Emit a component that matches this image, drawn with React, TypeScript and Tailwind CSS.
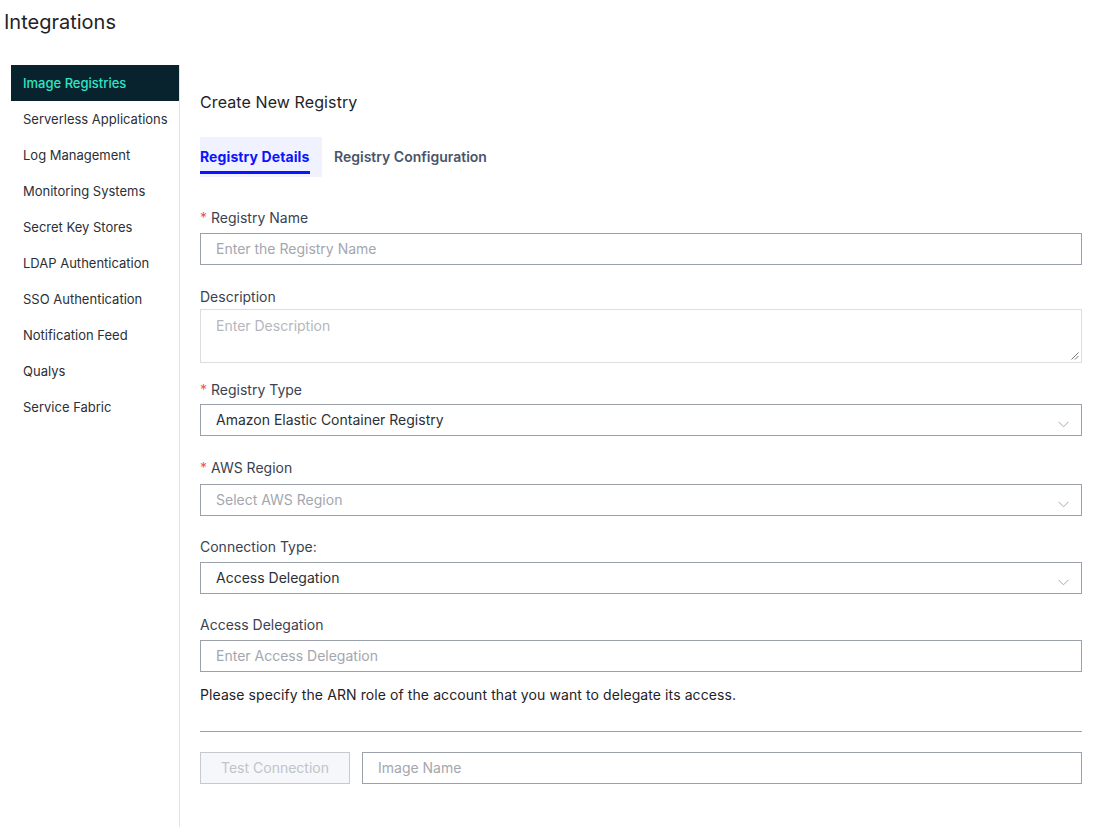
import React from "react";

const navItems = [
  "Image Registries",
  "Serverless Applications",
  "Log Management",
  "Monitoring Systems",
  "Secret Key Stores",
  "LDAP Authentication",
  "SSO Authentication",
  "Notification Feed",
  "Qualys",
  "Service Fabric",
];

function Chevron() {
  return (
    <svg width="11" height="7" viewBox="0 0 11 7" className="absolute right-[12px] top-[16px]">
      <path d="M0.5 0.8 L5.5 5.8 L10.5 0.8" fill="none" stroke="#a3aab8" strokeWidth="1" />
    </svg>
  );
}

function Label({ text, required }: { text: string; required?: boolean }) {
  return (
    <div className="text-[14px] leading-[20px] text-[#3b4252]">
      {required && <span className="text-[#f0555a] mr-[4px]">*</span>}
      {text}
    </div>
  );
}

function Select({ value, placeholder }: { value?: string; placeholder?: string }) {
  return (
    <div className="relative h-[32px] border border-[#9aa1aa] flex items-center pl-[15px] pb-[1px] text-[14px]">
      {value ? (
        <span className="text-[#2b2f36]">{value}</span>
      ) : (
        <span className="text-[#a3a7ae]">{placeholder}</span>
      )}
      <Chevron />
    </div>
  );
}

function Input({ placeholder }: { placeholder: string }) {
  return (
    <div className="h-[32px] border border-[#9aa1aa] flex items-center pl-[15px] pb-[1px] text-[14px] text-[#a3a7ae]">
      {placeholder}
    </div>
  );
}

export default function App() {
  return (
    <div className="w-[1099px] h-[827px] bg-white overflow-hidden" style={{ fontFamily: "Inter, 'Noto Sans', sans-serif" }}>
      <div className="pl-[4px] pt-[9px] text-[20px] leading-[26px] text-[#1f2328]">Integrations</div>
      <div className="flex mt-[30px] pl-[11px]">
        <div className="w-[169px] h-[800px] border-r border-[#e3e4e6] flex flex-col">
          {navItems.map((item, i) => (
            <div
              key={item}
              className={
                i === 0
                  ? "h-[36px] flex items-center pl-[12px] pt-[2px] text-[13px] bg-[#08232d] text-[#2ee6c6] font-medium"
                  : "h-[36px] flex items-center pl-[12px] pt-[2px] text-[13px] text-[#2b2f36]"
              }
            >
              {item}
            </div>
          ))}
        </div>
        <div className="w-[882px] ml-[20px]">
          <div className="mt-[26px] text-[16px] leading-[22px] text-[#1f2328] tracking-[0.1px]">Create New Registry</div>
          <div className="flex mt-[24px] h-[40px]">
            <div className="w-[122px] bg-[#f0f3ff] relative">
              <div className="pt-[10px] text-[14px] font-bold text-[#0a14ff] leading-[20px] tracking-[0.1px]">Registry Details</div>
              <div className="absolute left-0 top-[34px] w-[110px] h-[3px] bg-[#0a14ff]" />
            </div>
            <div className="pl-[12px] pt-[10px] text-[14px] font-semibold text-[#4a5568] leading-[20px]">Registry Configuration</div>
          </div>

          <div className="mt-[31px]">
            <Label text="Registry Name" required />
            <div className="mt-[5px]"><Input placeholder="Enter the Registry Name" /></div>
          </div>

          <div className="mt-[22px]">
            <Label text="Description" />
            <div className="mt-[2px] relative h-[54px] border border-[#dcdde1] pl-[15px] pt-[5px] text-[14px] text-[#b4b7bd]">
              Enter Description
              <svg width="8" height="8" viewBox="0 0 8 8" className="absolute right-[2px] bottom-[2px]">
                <path d="M7.5 0.5 L0.5 7.5 M7.5 4 L4 7.5" stroke="#777" strokeWidth="1" />
              </svg>
            </div>
          </div>

          <div className="mt-[17px]">
            <Label text="Registry Type" required />
            <div className="mt-[4px]"><Select value="Amazon Elastic Container Registry" /></div>
          </div>

          <div className="mt-[22px]">
            <Label text="AWS Region" required />
            <div className="mt-[6px]"><Select placeholder="Select AWS Region" /></div>
          </div>

          <div className="mt-[21px]">
            <Label text="Connection Type:" />
            <div className="mt-[5px]"><Select value="Access Delegation" /></div>
          </div>

          <div className="mt-[21px]">
            <Label text="Access Delegation" />
            <div className="mt-[5px]"><Input placeholder="Enter Access Delegation" /></div>
          </div>

          <div className="mt-[13px] text-[14px] leading-[20px] text-[#1f2328] tracking-[0.09px]">
            Please specify the ARN role of the account that you want to delegate its access.
          </div>

          <div className="mt-[26px] h-px bg-[#9aa1aa]" />

          <div className="mt-[20px] flex gap-[12px]">
            <div className="w-[150px] h-[32px] border border-[#c6cad0] bg-[#f5f7fa] flex items-center justify-center pb-[1px] text-[14px] text-[#c0c4cb]">
              Test Connection
            </div>
            <div className="flex-1 h-[32px] border border-[#9aa1aa] flex items-center pl-[15px] pb-[1px] text-[14px] text-[#a3a7ae]">
              Image Name
            </div>
          </div>
        </div>
      </div>
    </div>
  );
}
